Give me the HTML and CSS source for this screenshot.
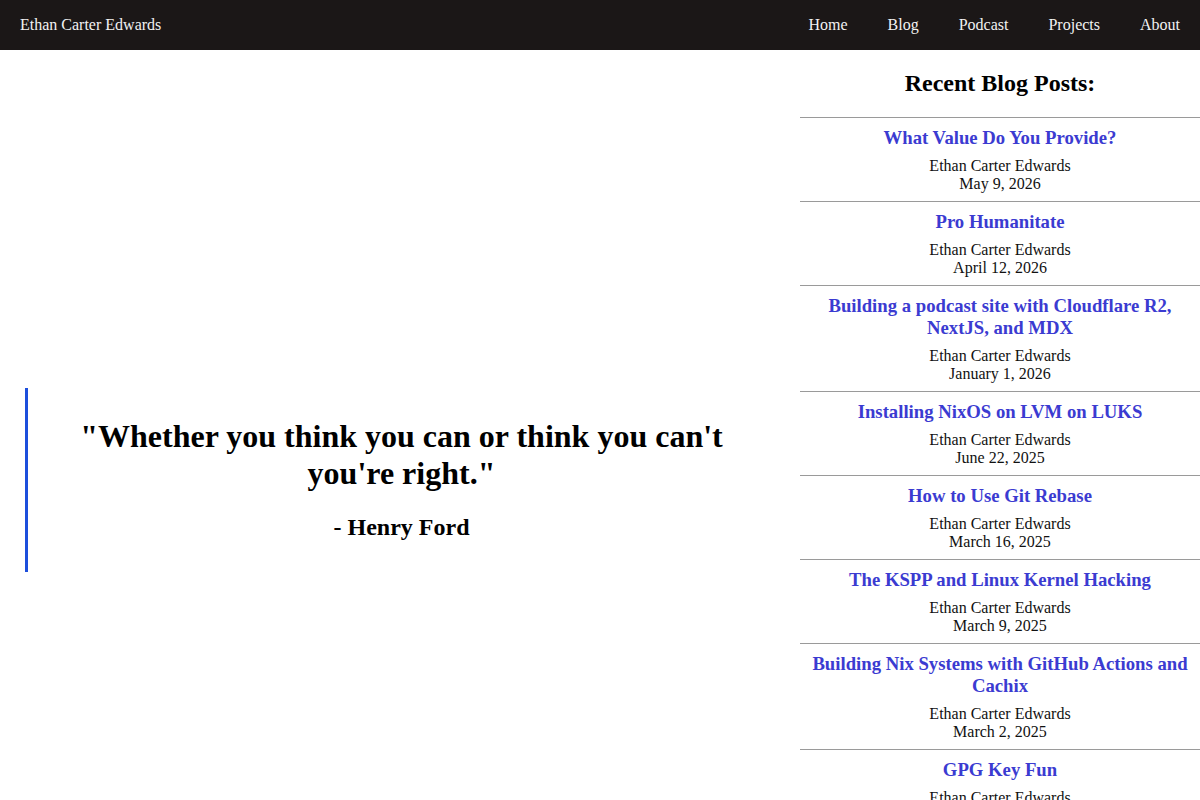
FILE: index.html
```html
<!DOCTYPE html>
<html lang="en">
<head>
  <meta charset="utf-8">
  <link rel="stylesheet" href="styles.css">
</head>
<body>
  <header class="topbar">
    <a class="brand" href="#">Ethan Carter Edwards</a>
    <nav class="nav">
      <a href="#">Home</a>
      <a href="#">Blog</a>
      <a href="#">Podcast</a>
      <a href="#">Projects</a>
      <a href="#">About</a>
    </nav>
  </header>

  <div class="page">
    <main class="main">
      <blockquote class="quote">
        <p class="quote-text">"Whether you think you can or think you can't you're right."</p>
        <p class="quote-author">- Henry Ford</p>
      </blockquote>
    </main>

    <aside class="sidebar">
      <h2 class="sidebar-title">Recent Blog Posts:</h2>
      <ul class="posts">
        <li class="post">
          <a class="post-title" href="#">What Value Do You Provide?</a>
          <div class="post-meta">Ethan Carter Edwards<br>May 9, 2026</div>
        </li>
        <li class="post">
          <a class="post-title" href="#">Pro Humanitate</a>
          <div class="post-meta">Ethan Carter Edwards<br>April 12, 2026</div>
        </li>
        <li class="post">
          <a class="post-title" href="#">Building a podcast site with Cloudflare R2, NextJS, and MDX</a>
          <div class="post-meta">Ethan Carter Edwards<br>January 1, 2026</div>
        </li>
        <li class="post">
          <a class="post-title" href="#">Installing NixOS on LVM on LUKS</a>
          <div class="post-meta">Ethan Carter Edwards<br>June 22, 2025</div>
        </li>
        <li class="post">
          <a class="post-title" href="#">How to Use Git Rebase</a>
          <div class="post-meta">Ethan Carter Edwards<br>March 16, 2025</div>
        </li>
        <li class="post">
          <a class="post-title" href="#">The KSPP and Linux Kernel Hacking</a>
          <div class="post-meta">Ethan Carter Edwards<br>March 9, 2025</div>
        </li>
        <li class="post">
          <a class="post-title" href="#">Building Nix Systems with GitHub Actions and Cachix</a>
          <div class="post-meta">Ethan Carter Edwards<br>March 2, 2025</div>
        </li>
        <li class="post">
          <a class="post-title" href="#">GPG Key Fun</a>
          <div class="post-meta">Ethan Carter Edwards<br>February 16, 2025</div>
        </li>
      </ul>
    </aside>
  </div>
</body>
</html>
```

FILE: styles.css
```css
* {
  box-sizing: border-box;
}

body {
  margin: 0;
  font-family: "Liberation Serif", "Times New Roman", serif;
  font-size: 16px;
  color: #111111;
  background: #ffffff;
}

a {
  text-decoration: none;
}

.topbar {
  display: flex;
  align-items: center;
  justify-content: space-between;
  height: 50px;
  padding: 0 20px;
  background: #1b1717;
}

.brand {
  color: #f2f2f2;
}

.nav {
  display: flex;
  gap: 40px;
}

.nav a {
  color: #f2f2f2;
}

.page {
  display: flex;
}

.main {
  flex: 0 0 800px;
  padding: 338px 25px 0 25px;
}

.quote {
  margin: 0;
  padding: 30px 20px 31px;
  border-left: 3px solid #1d4fdc;
  text-align: center;
  font-weight: bold;
  color: #000000;
}

.quote-text {
  margin: 0 0 21px;
  font-size: 32px;
  line-height: 37px;
}

.quote-author {
  margin: 0;
  font-size: 24px;
  line-height: 28px;
}

.sidebar {
  flex: 0 0 400px;
  text-align: center;
}

.sidebar-title {
  margin: 0;
  padding: 19px 0 20px;
  font-size: 24px;
  line-height: 28px;
  color: #000000;
}

.posts {
  list-style: none;
  margin: 0;
  padding: 0;
}

.post {
  padding: 9px 10px 8px;
  border-top: 1px solid #9a9a9a;
}

.post-title {
  display: block;
  margin-bottom: 8px;
  font-size: 18.72px;
  font-weight: bold;
  line-height: 22px;
  color: #3b3bd1;
}

.post-meta {
  line-height: 18px;
}
```
